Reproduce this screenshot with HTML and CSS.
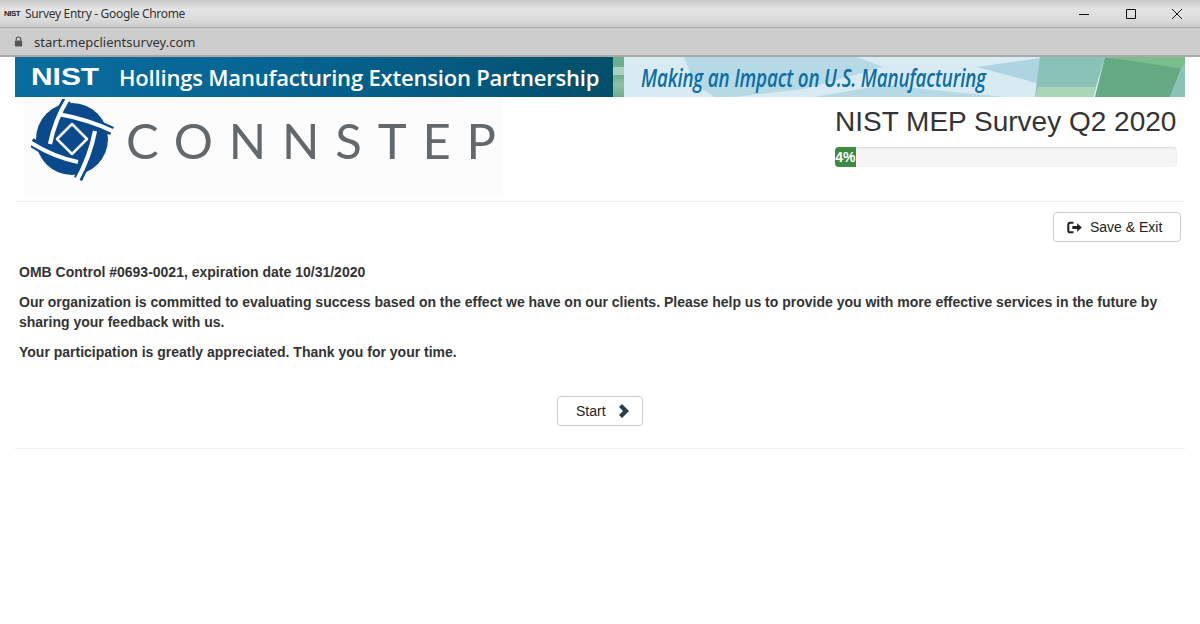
FILE: index.html
```html
<!DOCTYPE html>
<html lang="en">
<head>
    <meta charset="UTF-8">
    <title>Survey Entry</title>
    <link rel="stylesheet" href="styles.css">
</head>
<body>
    <!-- Browser chrome -->
    <div class="titlebar">
        <span class="favicon">NIST</span>
        <span class="window-title">Survey Entry - Google Chrome</span>
        <div class="window-controls">
            <svg class="window-icon" viewBox="0 0 46 24"><path d="M17 12.5h10" stroke="#111" fill="none"/></svg>
            <svg class="window-icon" viewBox="0 0 46 24"><path d="M18.5 7.5h9v9h-9z" stroke="#111" fill="none"/></svg>
            <svg class="window-icon" viewBox="0 0 46 24"><path d="M18 7l10 10M28 7L18 17" stroke="#111" fill="none"/></svg>
        </div>
    </div>
    <div class="addressbar">
        <svg class="lock" viewBox="0 0 10 12"><path d="M2.5 5V3.500a2.500 2.500 0 0 1 5 0V5" fill="none" stroke="#555" stroke-width="1.300"/><rect x="1" y="5" width="8" height="6.500" rx="1" fill="#555"/></svg>
        <span class="url">start.mepclientsurvey.com</span>
    </div>

    <div class="page">
        <!-- Top banner -->
        <div class="banner">
            <div class="banner-left">
                <span class="nist-mark">NIST</span>
                <span class="banner-title">Hollings Manufacturing Extension Partnership</span>
            </div>
            <div class="banner-strip"></div>
            <div class="banner-right">
                <svg class="banner-art" viewBox="0 0 561 40" preserveAspectRatio="none">
                    <path d="M0 0h561v40H0z" fill="#d8ebf3"/>
                    <path d="M60 0h173l26 10-79 22-70 8H90l-20-14z" fill="#b6d9e6"/>
                    <path d="M190 40l70-12 120 12z" fill="#b6d9e6"/>
                    <path d="M353 10l70-10-10 26z" fill="#aed3e1"/>
                    <path d="M416 0h65l-12 40h-58z" fill="#8ac2b8"/>
                    <path d="M414 30l-3 10h58l3-10z" fill="#a9d6b8"/>
                    <path d="M481 0l-10 40h75l12-30z" fill="#65a983"/>
                    <path d="M481 0h80v12z" fill="#7bbd8c"/>
                    <path d="M546 40l13-32h2v32z" fill="#8ac2b8"/>
                </svg>
                <span class="banner-slogan">Making an Impact on U.S. Manufacturing</span>
            </div>
        </div>

        <!-- Logo and progress -->
        <div class="header">
            <div class="logo">
                <svg class="logo-mark" viewBox="0 0 84 82">
                    <circle cx="41" cy="40" r="36" fill="#0a4a8c"/>
                    <g fill="none" stroke="#0a4a8c" stroke-width="9">
                        <path d="M36 1Q24 20 19 45"/>
                        <path d="M81 32Q56 20 27 15"/>
                        <path d="M47 80Q59 58 64 32"/>
                        <path d="M0 43Q22 58 47 63"/>
                    </g>
                    <g fill="none" stroke="#fdfdfe" stroke-width="4.200">
                        <path d="M38 -2Q24 20 19 45"/>
                        <path d="M84 33Q56 20 27 15"/>
                        <path d="M45 83Q59 58 64 32"/>
                        <path d="M-3 42Q22 58 47 63"/>
                    </g>
                    <path d="M41 25l15 15-15 15-15-15z" fill="#0a4a8c" stroke="#fdfdfe" stroke-width="2.500" stroke-linejoin="round"/>
                </svg>
                <span class="logo-text">CONNSTEP</span>
            </div>
            <div class="survey-info">
                <h1 class="survey-title">NIST MEP Survey Q2 2020</h1>
                <div class="progress">
                    <div class="progress-bar" style="width: 6%">4%</div>
                </div>
            </div>
        </div>
        <hr class="divider">

        <div class="toolbar">
            <button class="btn">
                <svg class="btn-icon" viewBox="0 0 14 12"><path d="M6 1.500H3A1.800 1.800 0 0 0 1.200 3.300v5.400A1.800 1.800 0 0 0 3 10.500h3" fill="none" stroke="#222" stroke-width="1.900"/><path d="M5 4.500h4.500V2L13.800 6 9.500 10V7.500H5z" fill="#222"/></svg>
                Save &amp; Exit
            </button>
        </div>

        <div class="intro">
            <p>OMB Control #0693-0021, expiration date 10/31/2020</p>
            <p>Our organization is committed to evaluating success based on the effect we have on our clients. Please help us to provide you with more effective services in the future by sharing your feedback with us.</p>
            <p>Your participation is greatly appreciated. Thank you for your time.</p>
        </div>

        <div class="actions">
            <button class="btn btn-start">
                Start
                <svg class="chevron" viewBox="0 0 12 14"><path d="M4 0l7 7-7 7-3-3 4-4-4-4z" fill="#263f4c"/></svg>
            </button>
        </div>
        <hr class="divider">
    </div>
</body>
</html>
```

FILE: styles.css
```css
* {
    box-sizing: border-box;
}

body {
    margin: 0;
    font-family: "Liberation Sans", Arial, sans-serif;
    font-size: 14px;
    line-height: 20px;
    color: #333;
    background-color: white;
    overflow: hidden;
}

/* Browser chrome */
.titlebar {
    display: flex;
    align-items: center;
    height: 28px;
    padding-left: 4px;
    background: linear-gradient(#c9c9c9, #e4e4e4 35%, #dcdcdc 70%, #cbcbcb);
    border-bottom: 1px solid #a9a9a9;
    color: #333;
}

.favicon {
    font-size: 8px;
    font-weight: bold;
    letter-spacing: -0.5px;
    width: 17px;
    color: #222;
}

.window-title {
    margin-left: 4px;
    font-family: "Noto Sans", sans-serif;
    font-size: 12px;
    letter-spacing: -0.32px;
}

.window-controls {
    display: flex;
    margin-left: auto;
}

.window-icon {
    width: 46px;
    height: 24px;
}

.addressbar {
    display: flex;
    align-items: center;
    height: 29px;
    padding-left: 14px;
    background-color: #cdcdcd;
    border-bottom: 2px solid #a9a9a9;
}

.lock {
    width: 9px;
    height: 11px;
}

.url {
    margin-left: 11px;
    font-family: "Noto Sans", sans-serif;
    font-size: 13px;
    color: #333;
}

.page {
    padding: 0 15px;
}

/* Banner */
.banner {
    display: flex;
    height: 40px;
    width: 1170px;
}

.banner-left {
    display: flex;
    align-items: center;
    width: 598px;
    padding-left: 16px;
    background: linear-gradient(100deg, #0a6d9f, #056491 45%, #03577a 80%, #024f68);
    color: white;
}

.nist-mark {
    display: inline-block;
    width: 53px;
    font-size: 23px;
    font-weight: bold;
    transform: scaleX(1.3);
    transform-origin: left center;
}

.banner-title {
    margin-left: 35px;
    font-family: "Open Sans", sans-serif;
    font-size: 22px;
    font-weight: 600;
    letter-spacing: -0.19px;
    white-space: nowrap;
}

.banner-strip {
    width: 11px;
    background: linear-gradient(#6fae8a, #6fae8a 25%, #a8d2bf 25%, #a8d2bf 45%, #6fae8a 45%, #8cc0a4 70%, #6fae8a);
}

.banner-right {
    position: relative;
    flex: 1;
    display: flex;
    align-items: center;
    padding-left: 17px;
}

.banner-art {
    position: absolute;
    top: 0;
    left: 0;
    width: 100%;
    height: 100%;
}

.banner-slogan {
    position: relative;
    font-family: "Open Sans", sans-serif;
    font-size: 25px;
    font-weight: 600;
    font-style: italic;
    letter-spacing: -0.2px;
    color: #0b6ea6;
    white-space: nowrap;
    transform: scaleX(0.75);
    transform-origin: left center;
}

/* Logo and progress */
.header {
    display: flex;
    justify-content: space-between;
    height: 104px;
}

.logo {
    display: flex;
    align-items: flex-start;
    width: 479px;
    height: 100px;
    margin-left: 9px;
    padding-left: 7px;
    background-color: #fcfcfd;
}

.logo-mark {
    flex: none;
    width: 84px;
    height: 82px;
    margin-top: 2px;
}

.logo-text {
    margin-left: 11px;
    margin-top: 15px;
    font-family: Lato, sans-serif;
    font-size: 49px;
    line-height: 56px;
    letter-spacing: 15.8px;
    color: #63686c;
    white-space: nowrap;
}

.survey-info {
    width: 350px;
    padding-right: 8px;
}

.survey-title {
    margin: 9px 0 10px;
    font-size: 28px;
    font-weight: normal;
    line-height: 31px;
    white-space: nowrap;
}

.progress {
    height: 20px;
    background-color: #f5f5f5;
    border-radius: 4px;
    overflow: hidden;
    box-shadow: inset 0 1px 2px rgba(0, 0, 0, 0.1);
}

.progress-bar {
    height: 100%;
    background-color: #3d8b40;
    color: white;
    font-size: 14px;
    font-weight: bold;
    line-height: 20px;
    text-align: center;
}

.divider {
    margin: 0;
    border: 0;
    border-top: 1px solid #eee;
}

.toolbar {
    display: flex;
    justify-content: flex-end;
    margin-top: 10px;
    padding-right: 4px;
}

.btn {
    display: inline-flex;
    align-items: center;
    height: 30px;
    font-family: inherit;
    font-size: 14px;
    color: #222;
    background-color: white;
    border: 1px solid #ccc;
    border-radius: 4px;
}

.toolbar .btn {
    width: 128px;
    padding: 0 0 0 13px;
    gap: 8px;
}

.btn-icon {
    width: 15px;
    height: 13px;
}

/* Intro text */
.intro {
    padding: 0 4px;
    margin-top: 20px;
    font-weight: bold;
    color: #333;
}

.intro p {
    margin: 0 0 10px;
}

.actions {
    display: flex;
    justify-content: center;
    margin: 34px 0 22px;
}

.btn-start {
    width: 86px;
    padding: 0 0 0 18px;
    gap: 12px;
}

.chevron {
    width: 12px;
    height: 14px;
}
```
